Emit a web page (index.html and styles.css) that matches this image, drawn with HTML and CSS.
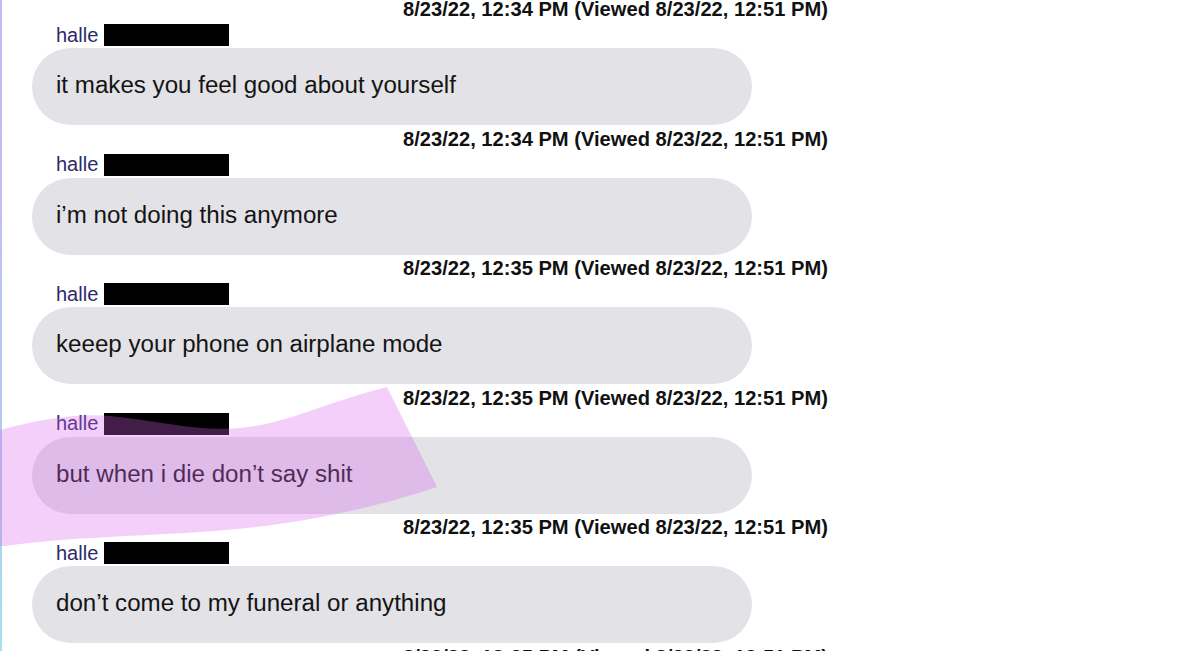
FILE: index.html
```
<!DOCTYPE html>
<html lang="en">

<head>
    <meta charset="UTF-8">
    <meta name="viewport" content="width=device-width, initial-scale=1.0">
    <title>halle</title>
    <link rel="stylesheet" href="styles.css">
</head>

<body>
    <div class="page">
        <div class="chat">
            <div class="msg">
                <div class="msg-time">8/23/22, 12:34 PM (Viewed 8/23/22, 12:51 PM)</div>
                <div class="msg-sender"><span class="sender-name">halle</span><span class="redacted"></span></div>
                <div class="bubble">it makes you feel good about yourself</div>
            </div>
            <div class="msg">
                <div class="msg-time">8/23/22, 12:34 PM (Viewed 8/23/22, 12:51 PM)</div>
                <div class="msg-sender"><span class="sender-name">halle</span><span class="redacted"></span></div>
                <div class="bubble">i’m not doing this anymore</div>
            </div>
            <div class="msg">
                <div class="msg-time">8/23/22, 12:35 PM (Viewed 8/23/22, 12:51 PM)</div>
                <div class="msg-sender"><span class="sender-name">halle</span><span class="redacted"></span></div>
                <div class="bubble">keeep your phone on airplane mode</div>
            </div>
            <div class="msg">
                <div class="msg-time">8/23/22, 12:35 PM (Viewed 8/23/22, 12:51 PM)</div>
                <div class="msg-sender"><span class="sender-name">halle</span><span class="redacted"></span></div>
                <div class="bubble">but when i die don’t say shit</div>
            </div>
            <div class="msg">
                <div class="msg-time">8/23/22, 12:35 PM (Viewed 8/23/22, 12:51 PM)</div>
                <div class="msg-sender"><span class="sender-name">halle</span><span class="redacted"></span></div>
                <div class="bubble">don’t come to my funeral or anything</div>
            </div>
            <div class="msg">
                <div class="msg-time">8/23/22, 12:35 PM (Viewed 8/23/22, 12:51 PM)</div>
            </div>
        </div>

        <!-- highlighter stroke -->
        <svg class="marker" width="1200" height="651" viewBox="0 0 1200 651">
            <path d="M0 430 C 40 419 80 413 110 416 C 160 421 200 432 240 428 C 290 423 320 404 387 387 L 437 487 C 380 506 300 526 200 532 C 120 537 60 538 6 546 L 0 546 Z" />
        </svg>
    </div>
</body>

</html>
```

FILE: styles.css
```
* {
    margin: 0;
    padding: 0;
    box-sizing: border-box;
}

html,
body {
    width: 100%;
    height: 651px;
    overflow: hidden;
    background: #ffffff;
    font-family: "Liberation Sans", Arial, sans-serif;
}

.page {
    position: relative;
    height: 651px;
    border-left: 2px solid;
    border-image: linear-gradient(#c9b8f2, #b7c6ef 60%, #a6e0ef) 1;
}

.chat {
    width: 826px;
    padding-left: 30px;
}

.msg {
    display: flex;
    flex-direction: column;
    height: 129.5px;
}

.msg-time {
    text-align: right;
    font-size: 20.15px;
    font-weight: bold;
    line-height: 18px;
    color: #111111;
}

.msg-sender {
    display: flex;
    align-items: center;
    height: 22px;
    margin-top: 6px;
    padding-left: 24px;
}

.sender-name {
    font-size: 20px;
    color: #2c2a6a;
}

.redacted {
    display: inline-block;
    width: 125px;
    height: 22px;
    margin-left: 6px;
    background: #000000;
}

.bubble {
    width: 720px;
    height: 77px;
    margin-top: 2px;
    padding-left: 24px;
    padding-bottom: 4px;
    border-radius: 39px;
    background: #e3e2e7;
    font-size: 24.15px;
    line-height: 73px;
    color: #141414;
}

.marker {
    position: absolute;
    left: -2px;
    top: 0;
    pointer-events: none;
}

.marker path {
    fill: rgba(215, 95, 240, 0.3);
}
```
